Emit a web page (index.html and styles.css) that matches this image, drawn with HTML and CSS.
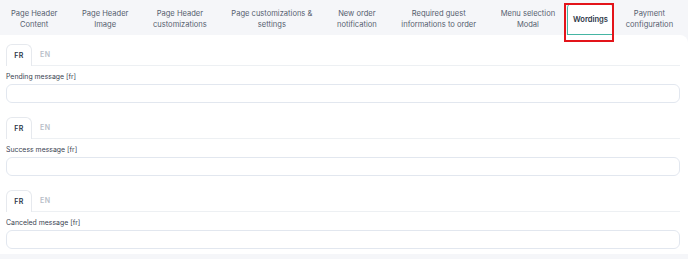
FILE: index.html
```html
<!DOCTYPE html>
<html lang="en">
<head>
    <meta charset="UTF-8">
    <meta name="viewport" content="width=device-width, initial-scale=1.0">
    <title>Wordings</title>
    <link rel="stylesheet" href="styles.css">
</head>
<body>
    <nav class="tabs">
        <div class="tab">Page Header<br>Content</div>
        <div class="tab">Page Header<br>Image</div>
        <div class="tab">Page Header<br>customizations</div>
        <div class="tab">Page customizations &amp;<br>settings</div>
        <div class="tab">New order<br>notification</div>
        <div class="tab">Required guest<br>informations to order</div>
        <div class="tab">Menu selection<br>Modal</div>
        <div class="tab active">Wordings</div>
        <div class="tab">Payment<br>configuration</div>
    </nav>

    <main class="panel">
        <section class="field">
            <div class="lang-tabs">
                <span class="lang current">FR</span>
                <span class="lang">EN</span>
            </div>
            <label class="label">Pending message [fr]</label>
            <input class="input" type="text">
        </section>

        <section class="field">
            <div class="lang-tabs">
                <span class="lang current">FR</span>
                <span class="lang">EN</span>
            </div>
            <label class="label">Success message [fr]</label>
            <input class="input" type="text">
        </section>

        <section class="field">
            <div class="lang-tabs">
                <span class="lang current">FR</span>
                <span class="lang">EN</span>
            </div>
            <label class="label">Canceled message [fr]</label>
            <input class="input" type="text">
        </section>
    </main>
</body>
</html>
```

FILE: styles.css
```css
body {
    margin: 0;
    font-family: Inter, 'Noto Sans', sans-serif;
    background-color: #f5f6f9;
    color: #2d3748;
    width: 688px;
    height: 259px;
    overflow: hidden;
}

.tabs {
    display: flex;
    align-items: flex-end;
    height: 35px;
}

.tab {
    height: 32px;
    padding: 0 12.3px;
    display: flex;
    align-items: center;
    justify-content: center;
    text-align: center;
    font-size: 7.55px;
    line-height: 11px;
    color: #56606f;
    white-space: nowrap;
    box-sizing: border-box;
}

.tab:first-child {
    padding-left: 11px;
}

.tab.active {
    position: relative;
    background: #fff;
    color: #2d3748;
    font-weight: 600;
    border: 1px solid #d4dcdb;
    border-left-color: #45b5a3;
    border-bottom-color: #45b5a3;
    border-radius: 5px 5px 0 0;
    width: 46px;
    padding: 0;
}

/* red annotation box */
.tab.active::after {
    content: '';
    position: absolute;
    left: -4px;
    right: -2px;
    top: -1px;
    bottom: -8px;
    border: 2px solid #e3141a;
}

.panel {
    background: #fff;
    border-radius: 0 8px 0 0;
    padding: 9px 8px 0 6px;
    height: 219px;
    box-sizing: border-box;
    overflow: hidden;
}

.field {
    display: flex;
    flex-direction: column;
    margin-bottom: 14px;
}

.lang-tabs {
    display: flex;
    align-items: flex-end;
    border-bottom: 1px solid #edf0f3;
    height: 21px;
}

.lang {
    font-size: 7px;
    font-weight: 600;
    letter-spacing: 0.5px;
    color: #b8bec8;
    padding: 0 8px;
    height: 21px;
    display: flex;
    align-items: center;
    box-sizing: border-box;
}

.lang.current {
    color: #2d3748;
    border: 1px solid #e6e9ee;
    border-bottom: none;
    border-radius: 6px 6px 0 0;
    width: 26px;
    justify-content: center;
    padding: 0;
    margin-bottom: -1px;
    height: 22px;
    background: #fff;
}

.label {
    font-size: 6.9px;
    color: #3a4352;
    margin-top: 6px;
    line-height: 10px;
}

.input {
    margin-top: 2px;
    height: 19px;
    border: 1px solid #e2e7ef;
    border-radius: 6px;
    box-sizing: border-box;
    background: #fff;
    width: 100%;
}
```
